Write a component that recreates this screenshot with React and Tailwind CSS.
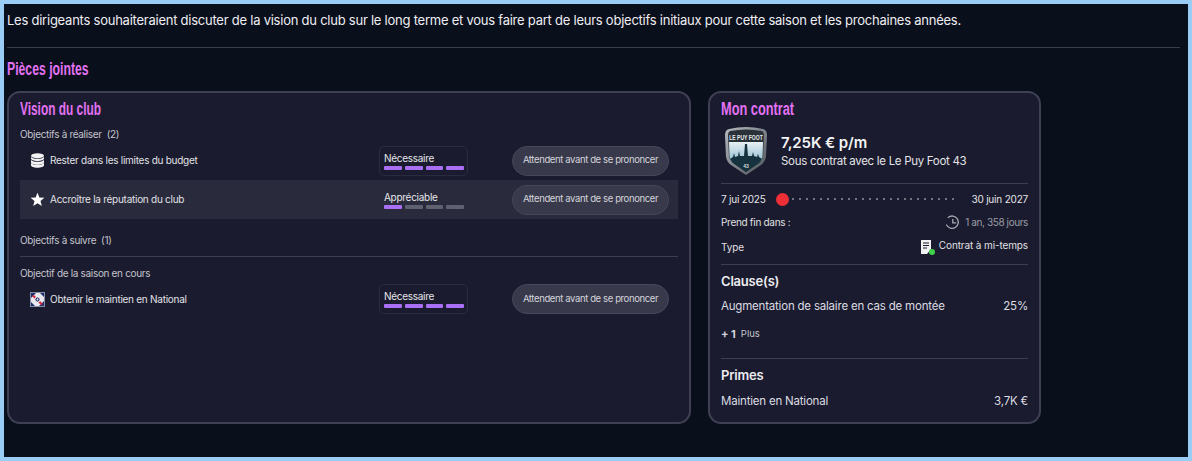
import React from "react";

function Title({ children, scale }) {
  return (
    <div className={`h-[20px] w-max origin-left text-[18px] leading-[20px] font-bold text-[#e272f2] whitespace-nowrap font-['Liberation_Sans',sans-serif] ${scale}`}>
      {children}
    </div>
  );
}

function Rating({ label, filled }) {
  const bars = [0, 1, 2, 3];
  return (
    <div className="w-[89px] h-[30px] shrink-0 rounded-[5px] border border-[#2a2b3e] px-[4px] pt-[5px]">
      <div className="text-[10px] leading-[13px] text-[#e6e6ea] tracking-[-0.28px]">{label}</div>
      <div className="flex gap-[3px] mt-[1px] w-[80px]">
        {bars.map((b) => (
          <div
            key={b}
            className={`h-[4px] flex-1 rounded-[1px] ${b < filled ? "bg-[#a96ff5]" : "bg-[#5f6070]"}`}
          />
        ))}
      </div>
    </div>
  );
}

function StatusPill() {
  return (
    <div className="w-[157px] h-[30px] shrink-0 ml-[44px] rounded-full border border-[#46475a] bg-[#38394b] flex items-center justify-center text-[9.5px] text-[#d4d4da] tracking-[-0.38px] whitespace-nowrap">
      Attendent avant de se prononcer
    </div>
  );
}

function ObjectiveRow({ icon, label, rating, filled, highlight, last }) {
  return (
    <div className={`h-[39px] flex items-center pl-[10px] pr-[9px] ${highlight ? "bg-[#292a3c]" : ""} ${last ? "pb-px" : ""}`}>
      <div className={`w-[20px] flex justify-start shrink-0 ${last ? "mt-px" : ""}`}>{icon}</div>
      <div className={`w-[329px] shrink-0 text-[10px] text-[#e2e2e6] tracking-[-0.27px] whitespace-nowrap ${last ? "mt-px" : ""}`}>{label}</div>
      <Rating label={rating} filled={filled} />
      <StatusPill />
    </div>
  );
}

function CoinsIcon() {
  const band = "M1 4.6v2.3c0 1.4 2.9 2.5 6.5 2.5s6.5-1.1 6.5-2.5V4.6c-1.2 1.2-3.6 1.9-6.5 1.9S2.2 5.8 1 4.6z";
  return (
    <svg width="15" height="15" viewBox="0 0 15 15" fill="#f2f2f4">
      <ellipse cx="7.5" cy="2.7" rx="6.5" ry="2.5" />
      <path d="M1 3.9v1.6c0 1.4 2.9 2.5 6.5 2.5s6.5-1.1 6.5-2.5V3.9c-1.2 1.2-3.6 1.9-6.5 1.9S2.2 5.1 1 3.9z" />
      <path d={band} transform="translate(0 2.3)" />
      <path d={band} transform="translate(0 5.3)" />
    </svg>
  );
}

function StarIcon() {
  return (
    <svg width="15" height="15" viewBox="0 0 15 15">
      <polygon points="7.5,0.8 9.4,5.5 14.4,5.8 10.5,9 11.8,14 7.5,11.2 3.2,14 4.5,9 0.6,5.8 5.6,5.5" fill="#fff" />
    </svg>
  );
}

function LeagueIcon() {
  return (
    <svg width="15" height="15" viewBox="0 0 15 15">
      <rect x="0.5" y="0.5" width="14" height="14" fill="#e8e8ee" stroke="#8a8fa8" />
      <path d="M1 1h5L1 6zM14 14H9l5-5zM1 10l4 4H1zM14 5l-4-4h4z" fill="#1f2f6b" />
      <path d="M2 4l9 9 2-1-9-9z" fill="#d7263d" />
      <circle cx="7.5" cy="7.5" r="2.6" fill="#1f2f6b" stroke="#fff" />
      <circle cx="7.5" cy="7.5" r="0.9" fill="#fff" />
    </svg>
  );
}

function ClubBadge() {
  return (
    <svg width="44" height="50" viewBox="0 0 44 50" className="shrink-0">
      <defs>
        <linearGradient id="sky" x1="0" y1="0" x2="0" y2="1">
          <stop offset="0" stopColor="#e8f0f4" />
          <stop offset="1" stopColor="#8fbcd2" />
        </linearGradient>
        <linearGradient id="rim" x1="0" y1="0" x2="1" y2="1">
          <stop offset="0" stopColor="#b6bcc0" />
          <stop offset="1" stopColor="#4a5157" />
        </linearGradient>
      </defs>
      <path d="M5 3 Q22 -1 39 3 Q43 4 43 9 L42 31 Q41 36 37 39 L22 49 L7 39 Q3 36 2 31 L1 9 Q1 4 5 3Z" fill="url(#rim)" />
      <path d="M6 5 Q22 2 38 5 Q40 6 40 9 L39 31 Q38 34 35 37 L22 46 L9 37 Q6 34 5 31 L4 9 Q4 6 6 5Z" fill="#2b3138" />
      <path d="M5 16 H39 L38.5 31 Q38 34 35 36 H9 Q6 34 5.5 31Z" fill="url(#sky)" />
      <path d="M6 33 L9 31 L10 27 L11 31 L14 30 L15 25 L16 30 L20 30 L20.5 24 L21 18 L23 18 L23.5 24 L24 30 L28 30 L29 26 L30 30 L33 31 L34 28 L35 31 L38 33 L35 37 L22 46 L9 37Z" fill="#17323f" />
      <text transform="translate(22 13.5) scale(0.72 1.15)" textAnchor="middle" fontSize="7" fontWeight="700" fill="#e8edf0" className="font-['Liberation_Sans',sans-serif]">LE PUY FOOT</text>
      <text x="22" y="42" textAnchor="middle" fontSize="5" fontWeight="700" fill="#cfd8dc" className="font-['Liberation_Sans',sans-serif]">43</text>
    </svg>
  );
}

function ClockIcon() {
  return (
    <svg width="15" height="15" viewBox="0 0 15 15" fill="none" stroke="#a6a7b0" strokeWidth="1.3">
      <path d="M3.2 2.4A6.2 6.2 0 1 1 1.6 10" strokeLinecap="round" />
      <path d="M7.8 4v3.8h3.4" />
    </svg>
  );
}

function DocIcon() {
  return (
    <div className="relative w-[14px] h-[14px] mr-[4px] mt-[1px]">
      <svg width="11" height="14" viewBox="0 0 11 14" className="block">
        <path d="M0 0h10v9l-4 5H0z" fill="#f2f2f4" />
        <path d="M2 3h6M2 5.5h6M2 8h4" stroke="#1a1b2e" strokeWidth="1.1" />
      </svg>
      <div className="absolute right-0 bottom-[-1px] w-[6px] h-[6px] rounded-full bg-[#3fd24a]" />
    </div>
  );
}

function SliderDots() {
  const dots = Array.from({ length: 24 });
  return (
    <div className="flex-1 flex items-center pl-[3px] pr-[17px] justify-between">
      {dots.map((_, i) => (
        <div key={i} className="w-[2px] h-[2px] bg-[#73747f]" />
      ))}
    </div>
  );
}

function Divider({ className = "" }) {
  return <div className={`h-px bg-[#3d3e50] ${className}`} />;
}

export default function App() {
  return (
    <div className="w-[1192px] h-[461px] overflow-hidden border-4 border-[#9acdf6] bg-[#0a0f1c] pl-[3px] text-white font-['Inter',sans-serif]">
      <div className="w-[1173px] h-[44px] border-b border-[#3a3c4c] pt-[7px] text-[13px] leading-[18px] text-[#eeeef2] whitespace-nowrap tracking-[-0.24px]">
        Les dirigeants souhaiteraient discuter de la vision du club sur le long terme et vous faire part de leurs objectifs initiaux pour cette saison et les prochaines années.
      </div>
      <div className="mt-[11px]">
        <Title scale="scale-x-[0.68]">Pièces jointes</Title>
      </div>
      <div className="flex gap-[17px] mt-[12px] items-start">
        <section className="w-[684px] h-[333px] rounded-[13px] border-2 border-[#3f4054] bg-[#1a1b2e] px-[11px]">
          <div className="mt-[6px]">
            <Title scale="scale-x-[0.66]">Vision du club</Title>
          </div>
          <div className="mt-[8px] h-[14px] text-[10px] leading-[14px] text-[#c4c4cc] tracking-[-0.33px]">Objectifs à réaliser&nbsp; (2)</div>
          <ObjectiveRow icon={<CoinsIcon />} label="Rester dans les limites du budget" rating="Nécessaire" filled={4} />
          <ObjectiveRow icon={<StarIcon />} label="Accroître la réputation du club" rating="Appréciable" filled={1} highlight />
          <div className="mt-[14px] h-[14px] text-[10px] leading-[14px] text-[#c4c4cc] tracking-[-0.33px]">Objectifs à suivre&nbsp; (1)</div>
          <Divider className="mt-[9px]" />
          <div className="mt-[9px] h-[14px] text-[10px] leading-[14px] text-[#c4c4cc] tracking-[-0.33px]">Objectif de la saison en cours</div>
          <ObjectiveRow icon={<LeagueIcon />} label="Obtenir le maintien en National" rating="Nécessaire" filled={4} last />
        </section>

        <section className="w-[333px] h-[333px] rounded-[13px] border-2 border-[#3f4054] bg-[#1a1b2e] px-[11px]">
          <div className="mt-[6px]">
            <Title scale="scale-x-[0.71]">Mon contrat</Title>
          </div>
          <div className="flex items-center mt-[7px] h-[50px] pl-[3px]">
            <ClubBadge />
            <div className="ml-[13px]">
              <div className="text-[15px] leading-[20px] font-semibold text-[#f4f4f6] tracking-[-0.1px]">7,25K € p/m</div>
              <div className="text-[11.5px] leading-[16px] text-[#e4e4e8] tracking-[-0.3px]">Sous contrat avec le Le Puy Foot 43</div>
            </div>
          </div>
          <Divider className="mt-[7px]" />
          <div className="flex items-center h-[14px] mt-[8px] text-[10px] text-[#e4e4e8] tracking-[-0.2px]">
            <span className="w-[55px] whitespace-nowrap">7 jui 2025</span>
            <div className="w-[13px] h-[13px] rounded-full bg-[#ef2f35] shrink-0" />
            <SliderDots />
            <span className="whitespace-nowrap">30 juin 2027</span>
          </div>
          <div className="flex items-center justify-between h-[16px] mt-[8px] text-[10px] tracking-[-0.3px]">
            <span className="text-[#e0e0e4]">Prend fin dans :</span>
            <span className="flex items-center gap-[5px] text-[#9a9ba6] tracking-[-0.4px]"><ClockIcon />1 an, 358 jours</span>
          </div>
          <div className="flex items-center justify-between h-[18px] mt-[7px] text-[10px] tracking-[-0.12px]">
            <span className="text-[#e0e0e4] mt-[2px]">Type</span>
            <span className="flex items-center text-[#e0e0e4]"><DocIcon /><span className="mb-[2px]">Contrat à mi-temps</span></span>
          </div>
          <Divider className="mt-[9px]" />
          <div className="mt-[7px] h-[18px] text-[13px] leading-[18px] font-semibold text-[#ececf0] tracking-[-0.2px]">Clause(s)</div>
          <div className="flex justify-between mt-[7px] h-[18px] text-[11.5px] leading-[18px] text-[#dcdce2] tracking-[-0.2px]">
            <span>Augmentation de salaire en cas de montée</span>
            <span>25%</span>
          </div>
          <div className="flex items-center mt-[10px] h-[18px] text-[9.5px] text-[#c4c4cc]">
            <span className="font-bold text-[11px] mr-[5px] text-[#d4d4da]">+ 1</span>Plus
          </div>
          <Divider className="mt-[15px]" />
          <div className="mt-[7px] h-[18px] text-[13px] leading-[18px] font-semibold text-[#ececf0] tracking-[-0.2px]">Primes</div>
          <div className="flex justify-between mt-[8px] h-[18px] text-[11.5px] leading-[18px] text-[#dcdce2] tracking-[-0.2px]">
            <span>Maintien en National</span>
            <span>3,7K €</span>
          </div>
        </section>
      </div>
    </div>
  );
}
